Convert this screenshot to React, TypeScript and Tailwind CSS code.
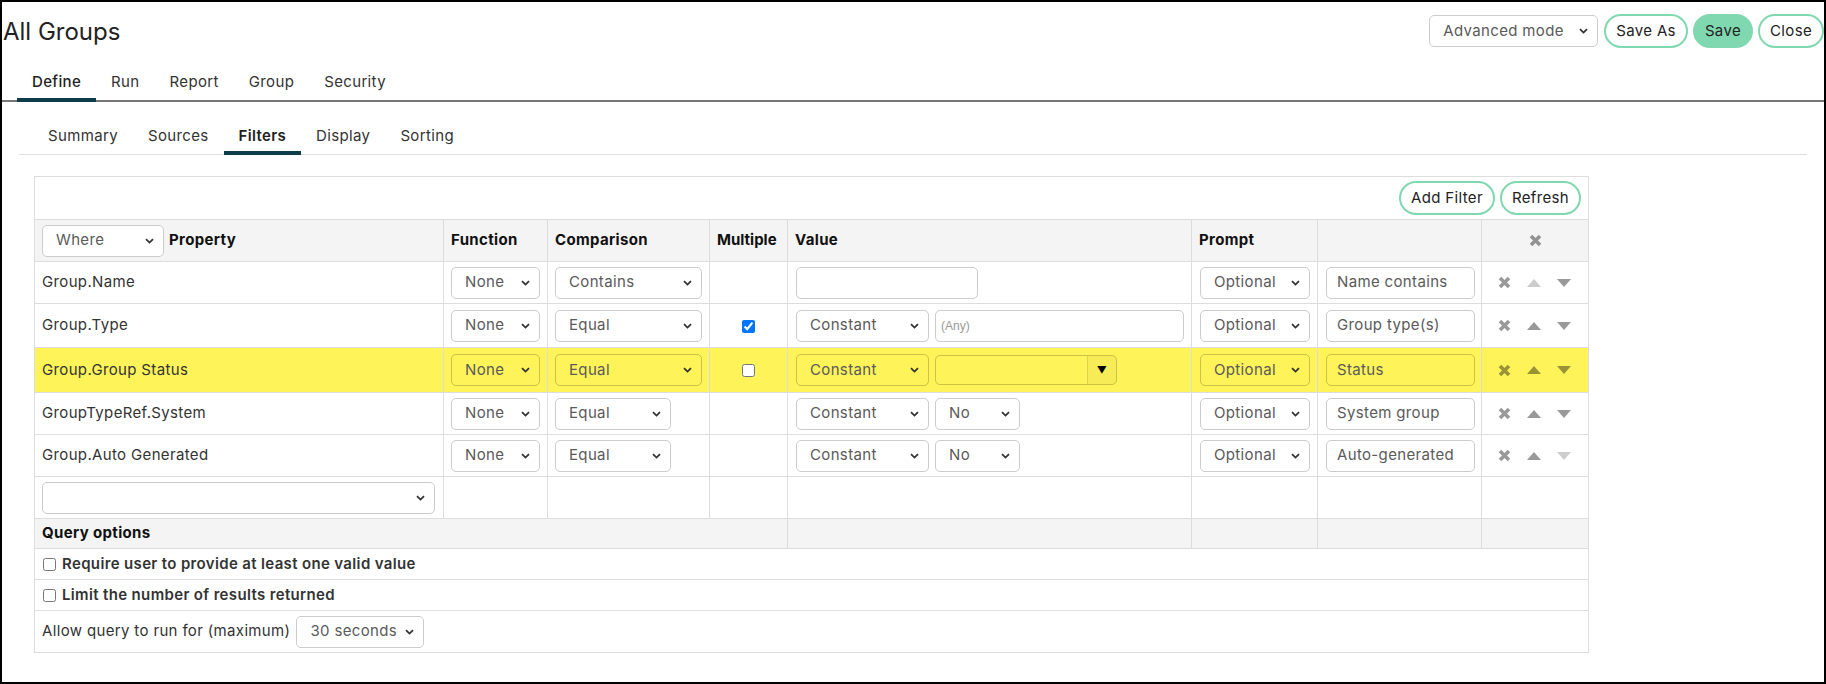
import React from 'react'

type Row = {
  prop: string
  cmp: string
  cmpW: string
  multiple: 'none' | 'checked' | 'unchecked'
  value: 'input' | 'any' | 'combo' | 'no'
  label: string
  upOff?: boolean
  downOff?: boolean
  hl?: boolean
  h: string
}

const rows: Row[] = [
  { prop: 'Group.Name', cmp: 'Contains', cmpW: 'w-[147px]', multiple: 'none', value: 'input', label: 'Name contains', upOff: true, h: 'h-[42px]' },
  { prop: 'Group.Type', cmp: 'Equal', cmpW: 'w-[147px]', multiple: 'checked', value: 'any', label: 'Group type(s)', h: 'h-[44px]' },
  { prop: 'Group.Group Status', cmp: 'Equal', cmpW: 'w-[147px]', multiple: 'unchecked', value: 'combo', label: 'Status', hl: true, h: 'h-[45px]' },
  { prop: 'GroupTypeRef.System', cmp: 'Equal', cmpW: 'w-[116px]', multiple: 'none', value: 'no', label: 'System group', h: 'h-[42px]' },
  { prop: 'Group.Auto Generated', cmp: 'Equal', cmpW: 'w-[116px]', multiple: 'none', value: 'no', label: 'Auto-generated', downOff: true, h: 'h-[42px]' },
]

function Chevron() {
  return (
    <svg width="9" height="6" viewBox="0 0 9 6" className="absolute right-[9px] top-1/2 -translate-y-1/2">
      <path d="M1 1.2 L4.5 4.6 L8 1.2" fill="none" stroke="#333" strokeWidth="1.8" />
    </svg>
  )
}

function Select({ value, w, hl }: { value: string; w: string; hl?: boolean }) {
  return (
    <div
      className={`relative flex items-center h-[32px] rounded-[5px] border pl-[13px] pr-[24px] text-[15px] font-normal text-[#5a5a5a] ${
        hl ? 'border-black/20' : 'border-[#ccc] bg-white'
      } ${w}`}
    >
      <span className="truncate">{value}</span>
      <Chevron />
    </div>
  )
}

function TextBox({ value, w, hl }: { value?: string; w: string; hl?: boolean }) {
  return (
    <div
      className={`flex items-center h-[32px] rounded-[5px] border px-[10px] text-[15px] text-[#5a5a5a] ${
        hl ? 'border-black/20' : 'border-[#ccc] bg-white'
      } ${w}`}
    >
      {value}
    </div>
  )
}

function XIcon({ off }: { off?: boolean }) {
  return (
    <svg width="13" height="13" viewBox="0 0 13 13" className={off ? 'text-black/20' : 'text-black/40'}>
      <path d="M2 2 L11 11 M11 2 L2 11" stroke="currentColor" strokeWidth="3.6" />
    </svg>
  )
}

function Tri({ up, off }: { up?: boolean; off?: boolean }) {
  return (
    <svg width="14" height="8" viewBox="0 0 14 8" className={off ? 'text-black/20' : 'text-black/40'}>
      <path d={up ? 'M0 8 L7 0 L14 8 Z' : 'M0 0 L14 0 L7 8 Z'} fill="currentColor" />
    </svg>
  )
}

function PillButton({ children, filled }: { children: React.ReactNode; filled?: boolean }) {
  return (
    <button
      className={`h-[34px] px-[10px] rounded-full border-2 border-[#80d8b0] text-[15px] text-[#222] ${
        filled ? 'bg-[#80d8b0]' : 'bg-white'
      }`}
    >
      {children}
    </button>
  )
}

export default function App() {
  const mainTabs = ['Define', 'Run', 'Report', 'Group', 'Security']
  const subTabs = ['Summary', 'Sources', 'Filters', 'Display', 'Sorting']
  const cell = 'border border-[#ddd] px-[7px]'

  return (
    <div className="w-[1826px] h-[684px] border-2 border-black bg-white text-[#333] overflow-hidden tracking-[0.35px] font-['Inter','Open_Sans',sans-serif]">
      {/* title + actions */}
      <div className="flex justify-between items-start pt-[12px] pl-[1px]">
        <h1 className="text-[24px] leading-[30px] mt-[3px] text-[#222] tracking-normal">All Groups</h1>
        <div className="flex items-center gap-[5px]">
          <div className="w-[169px] mr-[1px]">
            <Select value="Advanced mode" w="w-[169px]" />
          </div>
          <PillButton>Save As</PillButton>
          <PillButton filled>Save</PillButton>
          <PillButton>Close</PillButton>
        </div>
      </div>

      {/* main tabs */}
      <nav className="mt-[23px] flex pl-[15px] border-b-2 border-[#777]">
        {mainTabs.map((t) => (
          <div
            key={t}
            className={`px-[15px] text-[15px] leading-[22px] ${
              t === 'Define' ? 'font-medium text-[#222] border-b-4 border-[#0d3d4b] -mb-[2px] pb-[5px]' : 'text-[#333] pb-[6px]'
            }`}
          >
            {t}
          </div>
        ))}
      </nav>

      {/* sub tabs */}
      <nav className="mt-[23px] mx-[17px] flex pl-[14px] border-b border-[#ddd]">
        {subTabs.map((t) => (
          <div
            key={t}
            className={`px-[15px] text-[15px] leading-[22px] ${
              t === 'Filters' ? 'font-semibold text-[#222] border-b-4 border-[#0d3d4b] -mb-px pb-[3px]' : 'text-[#333] pb-[7px]'
            }`}
          >
            {t}
          </div>
        ))}
      </nav>

      {/* filters table */}
      <div className="mt-[21px] ml-[32px]">
        <table className="table-fixed border-collapse w-[1554px] text-[15px]">
          <colgroup>
            <col className="w-[409px]" />
            <col className="w-[104px]" />
            <col className="w-[162px]" />
            <col className="w-[78px]" />
            <col className="w-[404px]" />
            <col className="w-[126px]" />
            <col className="w-[164px]" />
            <col className="w-[107px]" />
          </colgroup>
          <tbody>
            <tr>
              <td colSpan={8} className="border border-[#ddd] h-[43px] pr-[7px]">
                <div className="flex justify-end gap-[5px]">
                  <PillButton>Add Filter</PillButton>
                  <PillButton>Refresh</PillButton>
                </div>
              </td>
            </tr>
            <tr className="bg-[#f4f4f4] font-bold text-[#111]">
              <td className={`${cell} h-[42px]`}>
                <div className="flex items-center gap-[5px]">
                  <Select value="Where" w="w-[122px]" />
                  <span>Property</span>
                </div>
              </td>
              <td className={cell}>Function</td>
              <td className={cell}>Comparison</td>
              <td className={`${cell} px-[6px] tracking-normal`}>Multiple</td>
              <td className={cell}>Value</td>
              <td className={cell}>Prompt</td>
              <td className={cell}></td>
              <td className={`${cell} text-center`}>
                <div className="flex justify-center">
                  <XIcon />
                </div>
              </td>
            </tr>
            {rows.map((r) => (
              <tr key={r.prop} className={r.hl ? 'bg-[#fff35a]' : ''}>
                <td className={`${cell} ${r.h}`}>{r.prop}</td>
                <td className={cell}>
                  <Select value="None" w="w-[89px]" hl={r.hl} />
                </td>
                <td className={cell}>
                  <Select value={r.cmp} w={r.cmpW} hl={r.hl} />
                </td>
                <td className={`${cell} text-center`}>
                  {r.multiple === 'checked' && <input type="checkbox" defaultChecked className="align-middle" />}
                  {r.multiple === 'unchecked' && <input type="checkbox" className="align-middle" />}
                </td>
                <td className={`${cell} pl-[8px]`}>
                  {r.value === 'input' ? (
                    <TextBox w="w-[182px]" />
                  ) : (
                    <div className="flex items-center gap-[6px]">
                      <Select value="Constant" w="w-[133px]" hl={r.hl} />
                      {r.value === 'any' && (
                        <div className="flex items-center h-[32px] w-[249px] rounded-[5px] border border-[#ccc] px-[5px] text-[12px] tracking-normal text-[#999] font-['Liberation_Sans',sans-serif]">
                          (Any)
                        </div>
                      )}
                      {r.value === 'combo' && (
                        <div className="flex h-[30px] w-[182px] rounded-[5px] border border-black/20 overflow-hidden">
                          <div className="flex-1" />
                          <div className="w-[29px] border-l border-black/10 bg-black/[0.03] flex items-center justify-center text-[10px] text-black">
                            ▼
                          </div>
                        </div>
                      )}
                      {r.value === 'no' && <Select value="No" w="w-[85px]" />}
                    </div>
                  )}
                </td>
                <td className={`${cell} pl-[8px]`}>
                  <Select value="Optional" w="w-[110px]" hl={r.hl} />
                </td>
                <td className={`${cell} pl-[8px]`}>
                  <TextBox value={r.label} w="w-[149px]" hl={r.hl} />
                </td>
                <td className={cell}>
                  <div className="flex items-center gap-[16px] pl-[9px]">
                    <XIcon />
                    <Tri up off={r.upOff} />
                    <Tri off={r.downOff} />
                  </div>
                </td>
              </tr>
            ))}
            <tr>
              <td className={`${cell} h-[42px]`}>
                <Select value="" w="w-[393px]" />
              </td>
              <td className={cell}></td>
              <td className={cell}></td>
              <td className={cell}></td>
              <td className={cell}></td>
              <td className={cell}></td>
              <td className={cell}></td>
              <td className={cell}></td>
            </tr>
            <tr className="bg-[#f4f4f4]">
              <td colSpan={4} className={`${cell} h-[30px] font-bold text-[#111]`}>
                Query options
              </td>
              <td className={cell}></td>
              <td className={cell}></td>
              <td className={cell}></td>
              <td className={cell}></td>
            </tr>
            <tr>
              <td colSpan={8} className={`${cell} h-[31px]`}>
                <label className="flex items-center gap-[6px] font-semibold text-[#333]">
                  <input type="checkbox" className="m-0 ml-[1px]" />
                  Require user to provide at least one valid value
                </label>
              </td>
            </tr>
            <tr>
              <td colSpan={8} className={`${cell} h-[31px]`}>
                <label className="flex items-center gap-[6px] font-semibold text-[#333]">
                  <input type="checkbox" className="m-0 ml-[1px]" />
                  Limit the number of results returned
                </label>
              </td>
            </tr>
            <tr>
              <td colSpan={8} className={`${cell} h-[42px]`}>
                <div className="flex items-center gap-[6px]">
                  <span>Allow query to run for (maximum)</span>
                  <Select value="30 seconds" w="w-[128px]" />
                </div>
              </td>
            </tr>
          </tbody>
        </table>
      </div>
    </div>
  )
}
